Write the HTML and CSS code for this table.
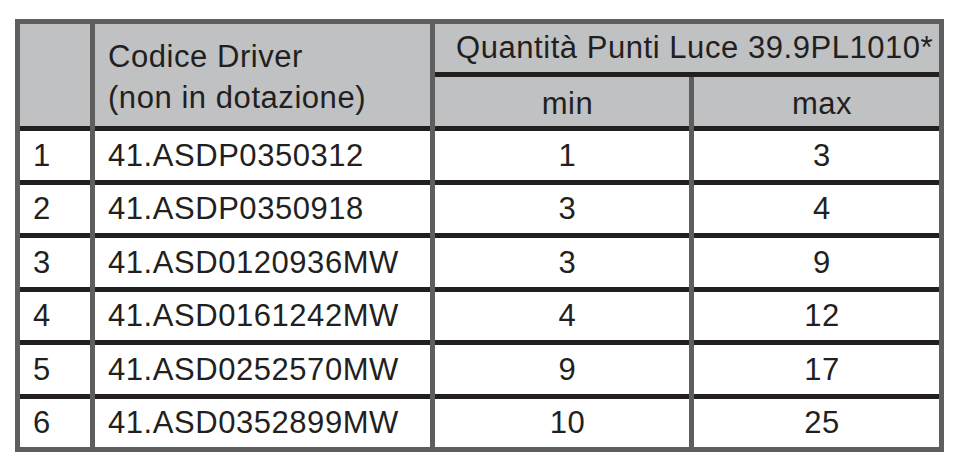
FILE: index.html
```html
<!DOCTYPE html>
<html lang="it">
<head>
<meta charset="utf-8">
<title>Codice Driver</title>
<link rel="stylesheet" href="styles.css">
</head>
<body>
<div class="tbl">
  <div class="cell head blank"></div>
  <div class="cell head code-head">Codice Driver<br>(non in dotazione)</div>
  <div class="cell head qty-head">Quantità Punti Luce 39.9PL1010*</div>
  <div class="cell head sub center">min</div>
  <div class="cell head sub center">max</div>

  <div class="cell num">1</div><div class="cell code">41.ASDP0350312</div><div class="cell center">1</div><div class="cell center">3</div>
  <div class="cell num">2</div><div class="cell code">41.ASDP0350918</div><div class="cell center">3</div><div class="cell center">4</div>
  <div class="cell num">3</div><div class="cell code">41.ASD0120936MW</div><div class="cell center">3</div><div class="cell center">9</div>
  <div class="cell num">4</div><div class="cell code">41.ASD0161242MW</div><div class="cell center">4</div><div class="cell center">12</div>
  <div class="cell num">5</div><div class="cell code">41.ASD0252570MW</div><div class="cell center">9</div><div class="cell center">17</div>
  <div class="cell num">6</div><div class="cell code">41.ASD0352899MW</div><div class="cell center">10</div><div class="cell center">25</div>
</div>
</body>
</html>
```

FILE: styles.css
```css
html, body {
  margin: 0;
  padding: 0;
  background: #ffffff;
}

body {
  font-family: "Liberation Sans", Arial, sans-serif;
  color: #231f20;
}

.tbl {
  margin: 19px 0 0 15px;
  width: 919px;
  border: 5px solid #5e5e5e;
  display: grid;
  grid-template-columns: 70px 335px 254px 245px;
  grid-template-rows: 48px 49px repeat(6, 48.5px);
  column-gap: 5px;
  row-gap: 5px;
  background:
    linear-gradient(#5e5e5e, #5e5e5e) 70px 0 / 5px 100% no-repeat,
    linear-gradient(#5e5e5e, #5e5e5e) 410px 0 / 5px 100% no-repeat,
    linear-gradient(#5e5e5e, #5e5e5e) 669px 53px / 5px 100% no-repeat,
    #231f20;
}

.cell {
  background: #ffffff;
  font-size: 31px;
  letter-spacing: 0.55px;
  line-height: 1.117;
  display: flex;
  align-items: center;
  padding: 2px 0 0 13px;
  box-sizing: border-box;
  white-space: nowrap;
}

.head {
  background: #c0c1c3;
  padding-top: 1px;
}

.blank {
  grid-row: 1 / 3;
  grid-column: 1;
}

.code-head {
  grid-row: 1 / 3;
  grid-column: 2;
  display: block;
  line-height: 41px;
  padding: 12px 0 0 13px;
}

.qty-head {
  grid-column: 3 / 5;
  grid-row: 1;
  padding-left: 21px;
}

.center {
  justify-content: center;
  padding-left: 11px;
}

.sub {
  padding-top: 5px;
}
```
